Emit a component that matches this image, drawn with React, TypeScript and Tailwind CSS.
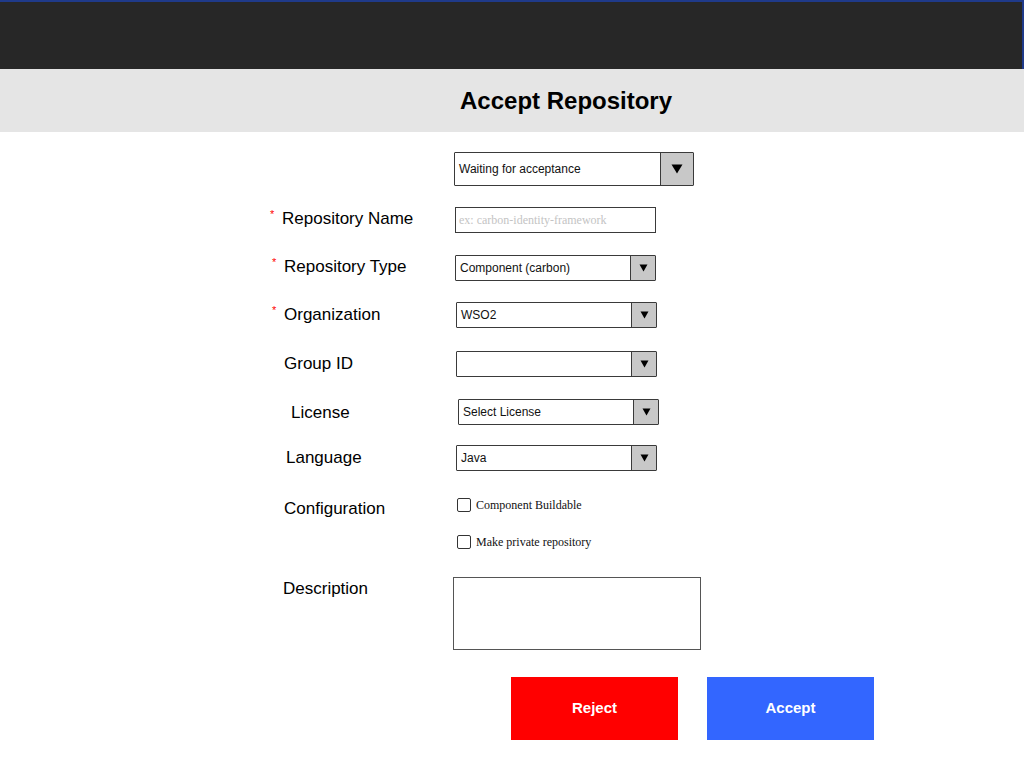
import React from "react";

const sans = "font-['Liberation_Sans',Arial,sans-serif]";
const serif = "font-['Liberation_Serif','Times_New_Roman',serif]";

function Arrow({ big }: { big?: boolean }) {
    return big ? (
        <svg width="12" height="10" viewBox="0 0 12 10">
            <path d="M0.5 0.5 L11.5 0.5 L6 9.5 Z" fill="#000" />
        </svg>
    ) : (
        <svg width="9" height="8" viewBox="0 0 9 8">
            <path d="M0.5 0.5 L8.5 0.5 L4.5 7.5 Z" fill="#000" />
        </svg>
    );
}

function Select({ value, big }: { value?: string; big?: boolean }) {
    return (
        <div
            className={`flex bg-white border border-[#3a3a3a] rounded-[1px] ${
                big ? "w-[240px] h-[34px]" : "w-[201px] h-[26px]"
            }`}
        >
            <div className={`flex-1 flex items-center pl-[4px] text-[12px] text-[#111] ${sans}`}>{value}</div>
            <div
                className={`flex items-center justify-center bg-[#c8c8c8] border-l border-[#3a3a3a] ${
                    big ? "w-[33px]" : "w-[25px]"
                }`}
            >
                <Arrow big={big} />
            </div>
        </div>
    );
}

function Label({ text, req, shift = "top-[-2px]" }: { text: string; req?: boolean; shift?: string }) {
    return (
        <div className={`relative ${shift} text-[17px] text-black leading-none ${sans}`}>
            {req && <span className="absolute left-[-12px] top-[-1px] text-[11px] text-[#ff0000]">*</span>}
            {text}
        </div>
    );
}

function Row({
    labelX,
    inputX,
    mt,
    label,
    req,
    shift,
    children,
}: {
    labelX: number;
    inputX: number;
    mt: string;
    label?: string;
    req?: boolean;
    shift?: string;
    children: React.ReactNode;
}) {
    return (
        <div className={`flex items-center ${mt}`}>
            <div className="shrink-0" style={{ width: inputX, paddingLeft: labelX }}>
                {label && <Label text={label} req={req} shift={shift} />}
            </div>
            {children}
        </div>
    );
}

function Check({ text }: { text: string }) {
    return (
        <div className="flex items-center gap-[5px]">
            <div className="w-[14px] h-[14px] border border-[#333] rounded-[2px] bg-white" />
            <span className={`text-[12px] text-[#111] ${serif}`}>{text}</span>
        </div>
    );
}

export default function App() {
    return (
        <div className="w-[1024px] h-[768px] bg-white overflow-hidden">
            <div className="h-[69px] bg-[#272727] border-t-2 border-r-2 border-[#1f3a8a]" />
            <div className="h-[63px] bg-[#e5e5e5] flex items-center pl-[460px]">
                <h1 className={`text-[24px] font-bold text-black ${sans}`}>Accept Repository</h1>
            </div>

            <div className="flex flex-col">
                <Row labelX={0} inputX={454} mt="mt-[20px]">
                    <Select value="Waiting for acceptance" big />
                </Row>

                <Row labelX={282} inputX={455} mt="mt-[21px]" label="Repository Name" req>
                    <div className="w-[201px] h-[26px] bg-white border border-[#3a3a3a] flex items-center pl-[3px]">
                        <span className={`text-[12px] text-[#c4c4c4] ${serif}`}>ex: carbon-identity-framework</span>
                    </div>
                </Row>

                <Row labelX={284} inputX={455} mt="mt-[22px]" label="Repository Type" req>
                    <Select value="Component (carbon)" />
                </Row>

                <Row labelX={284} inputX={456} mt="mt-[21px]" label="Organization" req shift="top-[-1px]">
                    <Select value="WSO2" />
                </Row>

                <Row labelX={284} inputX={456} mt="mt-[23px]" label="Group ID" shift="top-[-1px]">
                    <Select />
                </Row>

                <Row labelX={291} inputX={458} mt="mt-[22px]" label="License" shift="top-0">
                    <Select value="Select License" />
                </Row>

                <Row labelX={286} inputX={456} mt="mt-[20px]" label="Language" shift="top-[-1px]">
                    <Select value="Java" />
                </Row>

                <div className="flex mt-[25px]">
                    <div className="w-[457px] pl-[284px] pt-[6px] shrink-0">
                        <Label text="Configuration" />
                    </div>
                    <div className="flex flex-col gap-[19px]">
                        <Check text="Component Buildable" />
                        <Check text="Make private repository" />
                    </div>
                </div>

                <div className="flex mt-[26px]">
                    <div className="w-[453px] pl-[283px] pt-[5px] shrink-0">
                        <Label text="Description" />
                    </div>
                    <div className="w-[248px] h-[73px] border border-[#555] bg-white" />
                </div>

                <div className="flex mt-[27px] pl-[511px] gap-[29px]">
                    <button
                        className={`w-[167px] h-[63px] bg-[#ff0000] text-white text-[15px] font-bold ${sans}`}
                    >
                        Reject
                    </button>
                    <button
                        className={`w-[167px] h-[63px] bg-[#3366ff] text-white text-[15px] font-bold ${sans}`}
                    >
                        Accept
                    </button>
                </div>
            </div>
        </div>
    );
}
